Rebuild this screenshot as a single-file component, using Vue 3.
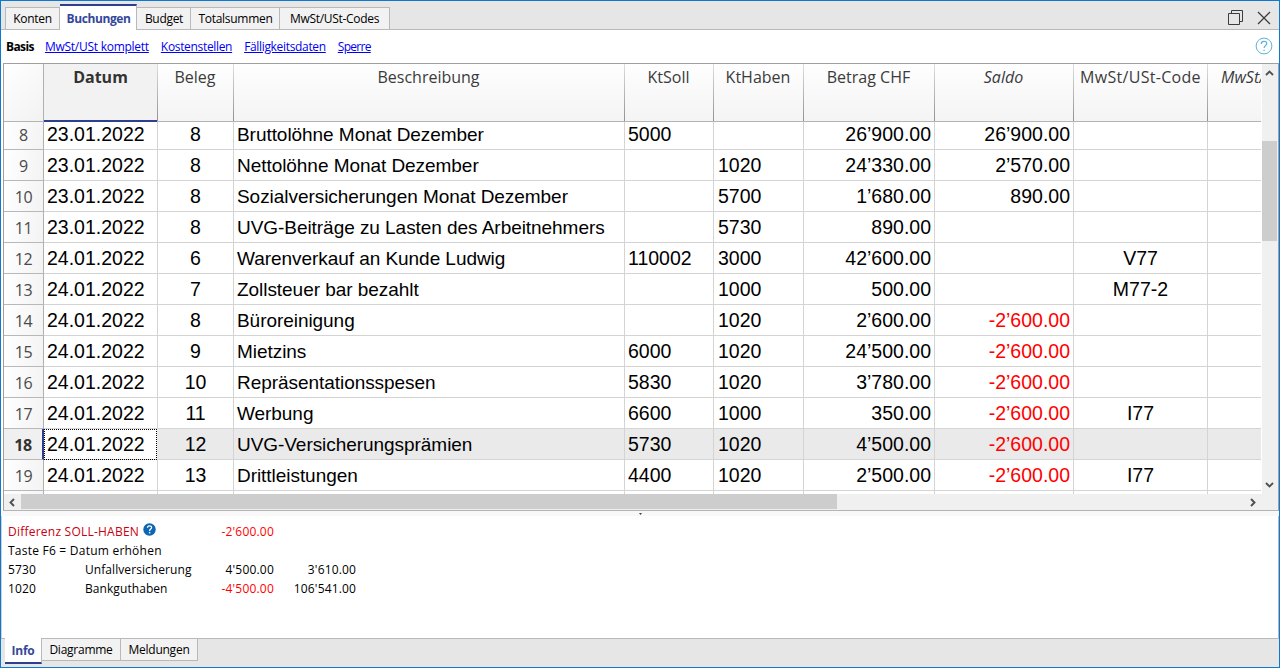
<script setup>
const tabs = [
  { label: 'Konten', w: 55 },
  { label: 'Buchungen', w: 77, active: true },
  { label: 'Budget', w: 54 },
  { label: 'Totalsummen', w: 89 },
  { label: 'MwSt/USt-Codes', w: 110 },
]
const views = ['MwSt/USt komplett', 'Kostenstellen', 'Fälligkeitsdaten', 'Sperre']
const columns = [
  { label: 'Datum', cls: 'current' },
  { label: 'Beleg' },
  { label: 'Beschreibung' },
  { label: 'KtSoll' },
  { label: 'KtHaben' },
  { label: 'Betrag CHF' },
  { label: 'Saldo', cls: 'italic' },
  { label: 'MwSt/USt-Code', cls: 'code' },
  { label: 'MwSt/', cls: 'italic cut' },
]
const rows = [
  [8, '23.01.2022', '8', 'Bruttolöhne Monat Dezember', '5000', '', '26’900.00', '26’900.00', ''],
  [9, '23.01.2022', '8', 'Nettolöhne Monat Dezember', '', '1020', '24’330.00', '2’570.00', ''],
  [10, '23.01.2022', '8', 'Sozialversicherungen Monat Dezember', '', '5700', '1’680.00', '890.00', ''],
  [11, '23.01.2022', '8', 'UVG-Beiträge zu Lasten des Arbeitnehmers', '', '5730', '890.00', '', ''],
  [12, '24.01.2022', '6', 'Warenverkauf an Kunde Ludwig', '110002', '3000', '42’600.00', '', 'V77'],
  [13, '24.01.2022', '7', 'Zollsteuer bar bezahlt', '', '1000', '500.00', '', 'M77-2'],
  [14, '24.01.2022', '8', 'Büroreinigung', '', '1020', '2’600.00', '-2’600.00', ''],
  [15, '24.01.2022', '9', 'Mietzins', '6000', '1020', '24’500.00', '-2’600.00', ''],
  [16, '24.01.2022', '10', 'Repräsentationsspesen', '5830', '1020', '3’780.00', '-2’600.00', ''],
  [17, '24.01.2022', '11', 'Werbung', '6600', '1000', '350.00', '-2’600.00', 'I77'],
  [18, '24.01.2022', '12', 'UVG-Versicherungsprämien', '5730', '1020', '4’500.00', '-2’600.00', ''],
  [19, '24.01.2022', '13', 'Drittleistungen', '4400', '1020', '2’500.00', '-2’600.00', 'I77'],
]
const kinds = ['', 'date', 'mid', 'desc', 'acct', 'acct haben', 'num', 'num', 'mid']
const isNeg = (v) => String(v).startsWith('-')
</script>

<template>
  <div class="window">
    <header class="tabbar">
      <div v-for="t in tabs" :key="t.label" class="tab" :class="{ active: t.active }" :style="{ width: t.w + 'px' }">
        <span>{{ t.label }}</span>
      </div>
      <svg class="winbtns" width="46" height="18" viewBox="0 0 46 18" fill="none" stroke="#3c3c3c">
        <path d="M1.5 4.5h11v11h-11zM4.5 4.5v-3h11v11h-3" />
        <path d="M31 3l12 12M43 3l-12 12" stroke-width="1.3" />
      </svg>
    </header>

    <nav class="views">
      <b>Basis</b>
      <a v-for="v in views" :key="v">{{ v }}</a>
      <svg class="help" width="18" height="18" viewBox="0 0 18 18" fill="none" stroke="#5fb0dd">
        <circle cx="9" cy="9" r="7.9" />
        <path d="M6.3 6.9c0-3.4 5.5-3.4 5.5-.4 0 2-2.7 2.1-2.7 4.6" stroke-width="1.2" />
        <path d="M9.1 12.7v1.4" stroke-width="1.3" />
      </svg>
    </nav>

    <main class="grid">
      <div class="sheet">
        <div class="line head">
          <div class="rownum"></div>
          <div v-for="(c, i) in columns" :key="i" class="hcell" :class="c.cls">{{ c.label }}</div>
        </div>
        <div class="body">
          <div v-for="r in rows" :key="r[0]" class="line row" :class="{ selected: r[0] === 18 }">
            <div class="rownum">{{ r[0] }}</div>
            <div
              v-for="i in 8"
              :key="i"
              class="cell"
              :class="[kinds[i], { neg: isNeg(r[i]), focus: r[0] === 18 && i === 1 }]"
            >{{ r[i] }}</div>
            <div class="cell last"></div>
          </div>
          <div class="line row">
            <div class="rownum"></div>
            <div v-for="i in 9" :key="i" class="cell" :class="{ last: i === 9 }"></div>
          </div>
        </div>
      </div>
      <div class="vscroll">
        <svg width="9" height="6" viewBox="0 0 9 6" fill="none" stroke="#505050" stroke-width="1.9"><path d="M1 5l3.5-3.5L8 5" /></svg>
        <div class="vthumb"></div>
        <svg class="down" width="9" height="6" viewBox="0 0 9 6" fill="none" stroke="#505050" stroke-width="1.9"><path d="M1 1l3.5 3.5L8 1" /></svg>
      </div>
      <div class="hscroll">
        <svg width="6" height="9" viewBox="0 0 6 9" fill="none" stroke="#505050" stroke-width="1.9"><path d="M5 1L1.5 4.5 5 8" /></svg>
        <div class="hthumb"></div>
        <svg class="right" width="6" height="9" viewBox="0 0 6 9" fill="none" stroke="#505050" stroke-width="1.9"><path d="M1 1l3.5 3.5L1 8" /></svg>
      </div>
    </main>

    <div class="splitter"><i></i></div>

    <section class="info">
      <div class="irow">
        <span class="title">Differenz SOLL-HABEN
          <svg width="13" height="13" viewBox="0 0 13 13"><circle cx="6.5" cy="6.5" r="6.2" fill="#0e66b2" /><path d="M4.5 4.8c0-2.6 4.1-2.6 4.1-.2 0 1.5-2 1.5-2 3.3" fill="none" stroke="#fff" stroke-width="1.3" /><path d="M6.6 8.9v1.5" stroke="#fff" stroke-width="1.4" /></svg>
        </span>
        <span class="n1 neg">-2'600.00</span>
      </div>
      <div class="irow"><span class="hint">Taste F6 = Datum erhöhen</span></div>
      <div class="irow"><span class="acc">5730</span><span class="name">Unfallversicherung</span><span class="n1">4'500.00</span><span class="n2">3'610.00</span></div>
      <div class="irow"><span class="acc">1020</span><span class="name">Bankguthaben</span><span class="n1 neg">-4'500.00</span><span class="n2">106'541.00</span></div>
    </section>

    <footer class="bottom">
      <div class="btab active">Info</div>
      <div class="btab dia">Diagramme</div>
      <div class="btab mel">Meldungen</div>
    </footer>
  </div>
</template>

<style>
body { margin: 0; overflow: hidden; }
</style>

<style scoped>
* { box-sizing: border-box; }
.window {
  width: 1280px; height: 668px; border: 1px solid #0f78cf; background: #fff; overflow: hidden;
  display: flex; flex-direction: column;
  font-family: "Open Sans", "Noto Sans", sans-serif; font-size: 12px; color: #000; white-space: nowrap;
}
.tabbar {
  height: 29px; flex: none; background: #e6e6e6; display: flex; align-items: flex-end;
  padding-left: 4px; box-shadow: inset 0 -1px #b9b9b9;
}
.tab {
  height: 23px; flex: none; border: 1px solid #b9b9b9; border-left-width: 0; background: #f2f2f2;
  text-align: center; line-height: 22px; letter-spacing: -0.3px;
}
.tab:first-child { border-left-width: 1px; }
.tab.active {
  height: 26px; background: #fff; border: 0; border-right: 1px solid #b9b9b9; border-top: 2px solid #2f3f8f;
  color: #34479a; font-weight: 700; line-height: 26px; letter-spacing: -0.4px; padding-left: 1px;
}
.tab:nth-child(n+3) { padding-left: 1px; }
.tab:last-of-type { padding-right: 1px; }
.winbtns { margin: 0 6px 3px auto; }
.views { height: 33px; flex: none; display: flex; align-items: center; padding: 0 6px 0 5px; letter-spacing: -0.26px; }
.views b { margin-right: 11px; letter-spacing: -0.6px; }
.views a { color: #0000f5; text-decoration: underline; margin-right: 12px; }
.views a:nth-of-type(n+2) { letter-spacing: -0.33px; }
.views a:last-of-type { letter-spacing: -0.7px; }
.help { margin-left: auto; margin-top: -1px; }
.grid {
  height: 448px; flex: none; margin-left: 2px; border: 1px solid #a0a0a0; border-bottom-color: #b4b4b4;
  display: grid; grid-template-columns: 1258px 16px; grid-template-rows: 430px 16px; width: 1276px;
}
.sheet { overflow: hidden; width: 1257px; }
.line { display: grid; grid-template-columns: 40px 114px 76px 391px 89px 90px 131px 139px 134px 53px; }
.head { height: 58px; border-bottom: 1px solid #b4b4b4; background: linear-gradient(#fefefe, #f4f4f4); }
.head > div { border-right: 1px solid; border-image: linear-gradient(#e0e0e0, #909090) 1; }
.head > .rownum { border-image: none; border-color: #b0b0b0; background: linear-gradient(135deg, #fff, #f2f2f2); }
.hcell { font-size: 16px; text-align: center; padding: 2px 1px 0 0; color: #3b3b3b; }
.hcell.current { background: #f2f2f2; font-weight: 700; color: #333; position: relative; padding-right: 0; }
.hcell.current::after { content: ""; position: absolute; left: 0; right: 0; bottom: -1px; height: 2px; background: #2f3f8f; }
.hcell.italic { font-style: italic; }
.hcell.code { letter-spacing: 0.3px; padding-right: 0; }
.head > .hcell.cut { border: 0; text-align: left; padding-left: 13px; }
.body { height: 372px; overflow: hidden; display: flex; flex-direction: column; }
.body .row:first-child { margin-top: -3px; }
.row { height: 31px; flex: none; }
.row > div { border-right: 1px solid #d4d4d4; border-bottom: 1px solid #d4d4d4; height: 31px; line-height: 31px; }
.row > .rownum {
  font-size: 16px; color: #4a4a4a; text-align: center; line-height: 33px; border-right-color: #b0b0b0;
  border-bottom-color: #b8b8b8; background: linear-gradient(100deg, #fff, #f3f3f3); letter-spacing: -0.3px;
}
.row > .last { border-right: 0; }
.cell { font-family: "Liberation Sans", Arial, sans-serif; font-size: 19.5px; padding: 0 3px; }
.mid { text-align: center; }
.num { text-align: right; }
.haben { padding-left: 4px; }
.row > .desc { font-size: 19px; letter-spacing: -0.05px; }
.neg { color: #f00; }
.selected { background: #eaeaea; }
.row.selected > .rownum { font-weight: 700; color: #333; background: #f0f0f0; border-right: 2px solid #2f3f8f; }
.row > .cell.focus { background: linear-gradient(#fff, #fff) padding-box; outline: 1px dotted #000; outline-offset: -1px; border-right: 0; margin-right: 1px; }
.vscroll { background: #f0f0f0; display: flex; flex-direction: column; align-items: center; padding: 6px 1px 0 0; height: 430px; }
.vthumb { width: 15px; height: 100px; background: #cdcdcd; margin-top: 65px; }
.down { margin-top: auto; margin-bottom: 6px; }
.hscroll { grid-column: 1 / 3; background: #f0f0f0; display: flex; align-items: center; padding: 0 22px 0 5px; }
.hthumb { width: 816px; height: 15px; background: #cdcdcd; margin: -1px 0 0 6px; }
.right { margin-left: auto; }
.splitter { height: 5px; flex: none; background: #f8f8f8; display: flex; justify-content: center; padding-left: 1px; }
.splitter i { width: 3px; height: 2px; margin-top: 2px; background: #444; clip-path: polygon(0 0, 100% 0, 50% 100%); }
.info { flex: 1; border-left: 1px solid #d0d0d0; border-right: 1px solid #b9b9b9; padding: 6px 0 0 6px; letter-spacing: 0.23px; }
.irow { height: 19px; line-height: 19px; display: flex; }
.title { width: 183px; color: #c8000f; }
.title svg { margin-left: 1px; vertical-align: 0; }
.acc { width: 77px; letter-spacing: 0.1px; }
.name { width: 106px; letter-spacing: 0.07px; }
.n1 { width: 83px; text-align: right; letter-spacing: 0.2px; }
.n2 { width: 82px; text-align: right; letter-spacing: 0.15px; }
.bottom { height: 29px; flex: none; background: #e6e6e6; display: flex; padding-left: 4px; box-shadow: inset 0 1px #b9b9b9; }
.btab { height: 23px; border: 1px solid #b9b9b9; border-left: 0; background: #f2f2f2; text-align: center; line-height: 22px; letter-spacing: -0.25px; }
.btab.active { width: 37px; height: 26px; background: #fff; border-top: 0; border-bottom: 2px solid #2f3f8f; color: #34479a; font-weight: 700; line-height: 26px; }
.dia { width: 79px; }
.mel { width: 77px; }
</style>
